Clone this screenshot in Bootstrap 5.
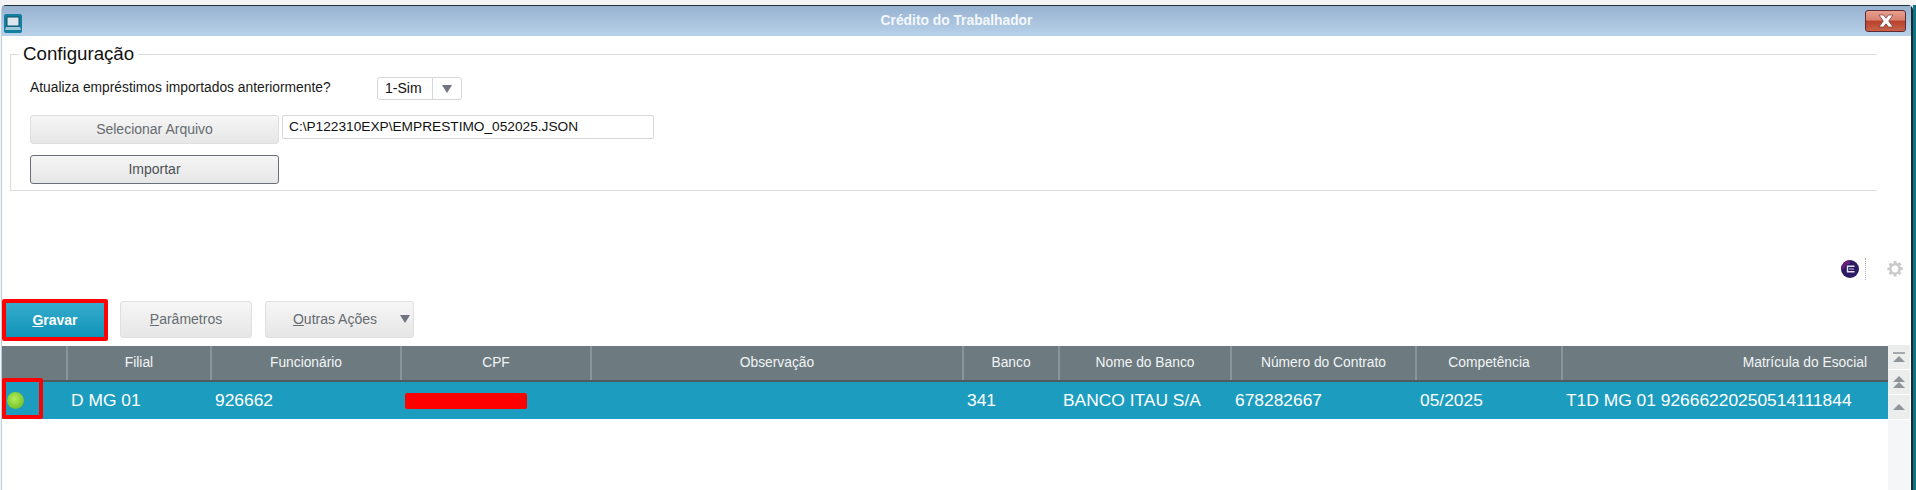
<!DOCTYPE html>
<html lang="pt-BR">
<head>
    <meta charset="UTF-8">
    <meta name="viewport" content="width=device-width, initial-scale=1.0">
    <title>Crédito do Trabalhador</title>
    <link href="https://cdn.jsdelivr.net/npm/bootstrap@5.3.3/dist/css/bootstrap.min.css" rel="stylesheet">
    <script src="https://cdn.jsdelivr.net/npm/bootstrap@5.3.3/dist/js/bootstrap.bundle.min.js"></script>
    <style>
        html, body { height: 490px; overflow: hidden; }
        body {
            background: #f4f4f4;
            font-family: "Liberation Sans", Arial, sans-serif;
            padding: 5px 0 0 1px;
        }
        .app-frame { height: 485px; }
        .app-window {
            width: 1912px;
            height: 485px;
            background: #fff;
            border-top: 1px solid #23323a;
            border-right: 2px solid #1c2a30;
            border-left: 1px solid #b9cfe4;
            border-top-left-radius: 5px;
            border-top-right-radius: 5px;
        }
        .edge-teal { width: 3px; background: #0e7488; }

        .title-bar {
            height: 30px;
            background: linear-gradient(#97b2d0, #b9d2ea);
            color: #f4f7fb;
            font-size: 13.8px;
            font-weight: 700;
        }
        .app-icon { position: absolute; left: 2px; top: 8px; }
        .close-btn {
            position: absolute;
            right: 5px;
            top: 4px;
            width: 41px;
            height: 22px;
            border: 1px solid #5e2a34;
            border-radius: 3px;
            background: linear-gradient(#e7a090 0, #d97f6d 46%, #b8412a 50%, #c9634c 100%);
            padding: 0;
        }

        .config-box {
            margin: 18px 34px 0 8px;
            height: 137px;
            border-top: 1px solid #dcdcdc;
            border-left: 1px solid #dcdcdc;
            border-bottom: 1px solid #dcdcdc;
            padding: 22px 0 0 19px;
        }
        .config-legend {
            position: absolute;
            left: 8px;
            top: -12px;
            padding: 0 4px 0 4px;
            background: #fff;
            font-size: 18.7px;
            line-height: 22px;
            color: #111;
        }
        .question-text { width: 347px; font-size: 13.8px; color: #1a1a1a; }
        .combo-box {
            width: 85px;
            height: 23px;
            border: 1px solid #d4d6da;
            border-radius: 3px;
            font-size: 14px;
            color: #111;
        }
        .combo-value { width: 55px; padding-left: 7px; border-right: 1px solid #d4d6da; }
        .tri-down {
            width: 0;
            height: 0;
            border-left: 5px solid transparent;
            border-right: 5px solid transparent;
            border-top: 8px solid #6f7480;
        }
        .file-row { margin-top: 15px; }
        .soft-btn {
            background: linear-gradient(#f6f6f6, #e6e6e6);
            border: 1px solid #dfdfdf;
            border-radius: 3px;
            color: #666c70;
            font-size: 14px;
            padding: 0 0 1px;
        }
        .file-btn { width: 249px; height: 29px; }
        .file-input {
            width: 372px;
            height: 24px;
            margin-left: 3px;
            border: 1px solid #d8d8d8;
            border-radius: 2px;
            padding: 0 6px 2px;
            font-size: 13.7px;
            color: #111;
        }
        .import-btn {
            display: block;
            width: 249px;
            height: 29px;
            margin-top: 11px;
            border: 1px solid #6a6e76;
            color: #4c5256;
        }

        .tool-icons { height: 22px; margin: 67px 8px 0 0; }
        .dot-line { height: 22px; border-left: 1px dotted #b5b5b5; margin: 0 21px 0 6px; }

        .action-bar { margin-top: 19px; height: 42px; }
        .save-btn {
            width: 106px;
            height: 42px;
            border: 4px solid #f00;
            border-radius: 2px;
            background: linear-gradient(#37abcc, #0f94b8);
            color: #fff;
            font-size: 14px;
            font-weight: 700;
            padding: 0;
            margin-right: 12px;
        }
        .plain-btn { height: 37px; margin-top: 2px; padding-bottom: 0; }
        .param-btn { width: 132px; margin-right: 13px; }
        .more-btn { width: 149px; padding-right: 9px; position: relative; }
        .more-caret { position: absolute; right: 3px; top: 13px; }

        .grid-wrap { margin-top: 5px; }
        .data-grid {
            width: 1886px;
            table-layout: fixed;
            margin: 0;
            border-collapse: collapse;
        }
        .data-grid th {
            height: 35px;
            padding: 0;
            background: #6d7b80;
            color: #f1f4f5;
            font-size: 13.8px;
            font-weight: 400;
            text-align: center;
            vertical-align: middle;
            border: 0;
            border-right: 2px solid #8b9599;
            border-bottom: 2px solid #4f5a5f;
        }
        .data-grid th:last-child { border-right: 0; text-align: right; padding-right: 21px; }
        .data-grid td {
            height: 38px;
            padding: 0 0 0 4px;
            background: #1c9dbf;
            color: #fff;
            font-size: 17.4px;
            vertical-align: middle;
            border: 0;
            box-shadow: none;
        }
        .cell-status { position: relative; }
        .status-dot {
            display: block;
            width: 17px;
            height: 17px;
            margin-left: 1px;
            border-radius: 50%;
            background: radial-gradient(circle at 45% 40%, #b2ec59, #7cc832 65%, #3f8a3a 100%);
        }
        .status-mark {
            position: absolute;
            left: 0;
            right: 24px;
            top: -4px;
            bottom: 0;
            border: 4px solid #f00;
            border-radius: 2px;
        }
        .cpf-hidden { display: block; width: 122px; height: 16px; background: #f00; border-radius: 2px; }

        .col-status { width: 65px; }
        .col-filial { width: 144px; }
        .col-func { width: 190px; }
        .col-cpf { width: 190px; }
        .col-obs { width: 372px; }
        .col-banco { width: 96px; }
        .col-nome { width: 172px; }
        .col-num { width: 185px; }
        .col-comp { width: 146px; }

        .scroll-rail { width: 22px; margin-top: -1px; background: #f5f6f8; }
        .scroll-btn {
            height: 25px;
            background: #eceded;
            border-bottom: 1px solid #fff;
        }
        .tri-up {
            width: 0;
            height: 0;
            border-left: 6px solid transparent;
            border-right: 6px solid transparent;
            border-bottom: 6px solid #8f9599;
        }
        .tri-bar { width: 12px; height: 2px; background: #a5aaae; margin-bottom: 2px; }
    </style>
</head>
<body>
<div class="app-frame d-flex">
    <div class="app-window d-flex flex-column">
        <div class="title-bar position-relative d-flex align-items-center justify-content-center">
            <svg class="app-icon" width="18" height="19" viewBox="0 0 18 19">
                <rect x="0" y="0" width="18" height="19" rx="2" fill="#14809f"/>
                <rect x="3" y="3" width="12" height="9" fill="#dbe6ee" stroke="#0b5368"/>
                <path d="M2 13h14l1 3H1z" fill="#9cc6d6"/>
            </svg>
            <span>Crédito do Trabalhador</span>
            <button type="button" class="close-btn d-flex align-items-center justify-content-center" aria-label="Fechar">
                <svg width="16" height="14" viewBox="0 0 16 14">
                    <path d="M1 1h4.5L8 4.2 10.5 1H15l-4.3 6 4.3 6h-4.5L8 9.8 5.5 13H1l4.3-6z" fill="#fff" stroke="#6b3a3a" stroke-width=".7"/>
                </svg>
            </button>
        </div>

        <div class="config-box position-relative">
            <div class="config-legend">Configuração</div>
            <div class="d-flex align-items-center">
                <span class="question-text">Atualiza empréstimos importados anteriormente?</span>
                <div class="combo-box d-flex align-items-center">
                    <span class="combo-value">1-Sim</span>
                    <span class="flex-grow-1 d-flex justify-content-center"><span class="tri-down"></span></span>
                </div>
            </div>
            <div class="file-row d-flex align-items-start">
                <button type="button" class="soft-btn file-btn">Selecionar Arquivo</button>
                <input class="file-input" type="text" value="C:\P122310EXP\EMPRESTIMO_052025.JSON">
            </div>
            <button type="button" class="soft-btn import-btn">Importar</button>
        </div>

        <div class="tool-icons d-flex justify-content-end align-items-center">
            <svg width="18" height="18" viewBox="0 0 18 18">
                <circle cx="9" cy="9" r="9" fill="#2c1a63"/>
                <path d="M0 9a9 9 0 0 1 9-9v4A6 6 0 0 0 3 9z" fill="#6a1f7c"/>
                <path d="M13.5 6.3H6.5v5.4h7" fill="none" stroke="#e6e3ee" stroke-width="1.4"/>
                <path d="M8 9h5" stroke="#a99fc4" stroke-width="1.2"/>
            </svg>
            <span class="dot-line"></span>
            <svg width="16" height="16" viewBox="0 0 16 16">
                <path fill="#c9c9c9" fill-rule="evenodd" d="M6.7 0h2.6l.3 2.1 1.2.5 1.7-1.3 1.9 1.9-1.3 1.7.5 1.2 2.1.3v2.6l-2.1.3-.5 1.2 1.3 1.7-1.9 1.9-1.7-1.3-1.2.5-.3 2.1H6.7l-.3-2.1-1.2-.5-1.7 1.3-1.9-1.9 1.3-1.7-.5-1.2L.3 9.3V6.7l2.1-.3.5-1.2-1.3-1.7 1.9-1.9 1.7 1.3 1.2-.5zM8 4.6a3.4 3.4 0 1 0 0 6.8 3.4 3.4 0 0 0 0-6.8z"/>
            </svg>
        </div>

        <div class="action-bar d-flex align-items-start">
            <button type="button" class="save-btn"><u>G</u>ravar</button>
            <button type="button" class="soft-btn plain-btn param-btn"><u>P</u>arâmetros</button>
            <button type="button" class="soft-btn plain-btn more-btn">
                <u>O</u>utras Ações
                <span class="tri-down more-caret d-block"></span>
            </button>
        </div>

        <div class="grid-wrap d-flex flex-grow-1">
            <table class="table data-grid align-self-start">
                <colgroup>
                    <col class="col-status"><col class="col-filial"><col class="col-func"><col class="col-cpf">
                    <col class="col-obs"><col class="col-banco"><col class="col-nome"><col class="col-num"><col class="col-comp"><col>
                </colgroup>
                <thead>
                    <tr>
                        <th></th><th>Filial</th><th>Funcionário</th><th>CPF</th><th>Observação</th>
                        <th>Banco</th><th>Nome do Banco</th><th>Número do Contrato</th><th>Competência</th>
                        <th>Matrícula do Esocial</th>
                    </tr>
                </thead>
                <tbody>
                    <tr>
                        <td class="cell-status"><span class="status-dot"></span><span class="status-mark"></span></td>
                        <td>D MG 01</td>
                        <td>926662</td>
                        <td><span class="cpf-hidden"></span></td>
                        <td></td>
                        <td>341</td>
                        <td>BANCO ITAU S/A</td>
                        <td>678282667</td>
                        <td>05/2025</td>
                        <td>T1D MG 01 92666220250514111844</td>
                    </tr>
                </tbody>
            </table>
            <div class="scroll-rail d-flex flex-column">
                <div class="scroll-btn d-flex flex-column align-items-center justify-content-center"><span class="tri-bar"></span><span class="tri-up"></span></div>
                <div class="scroll-btn d-flex flex-column align-items-center justify-content-center"><span class="tri-up"></span><span class="tri-up"></span></div>
                <div class="scroll-btn d-flex flex-column align-items-center justify-content-center"><span class="tri-up"></span></div>
            </div>
        </div>
    </div>
    <div class="edge-teal"></div>
</div>
</body>
</html>
